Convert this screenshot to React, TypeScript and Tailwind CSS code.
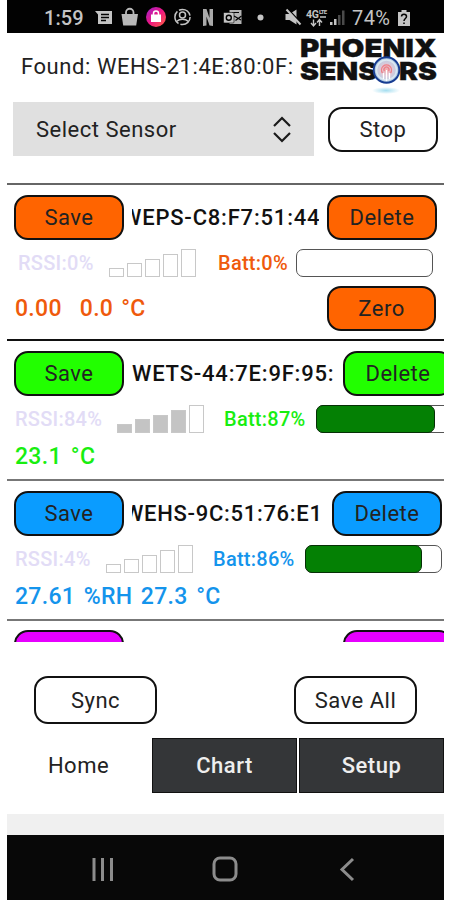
import { useState } from "react";
import clsx from "clsx";

type Sensor = {
  id: number;
  name: string;
  nameClass: string;
  rssi: number;
  rssiClass: string;
  barsClass: string;
  filledBars: number;
  batt: number;
  battClass: string;
  readings: string[];
  readingsClass: string;
  lineClass: string;
  fill: string;
  text: string;
  zero?: boolean;
};

const sensors: Sensor[] = [
  {
    id: 1,
    name: "WEPS-C8:F7:51:44:",
    nameClass: "w-[187px] mr-2 indent-[-10px] tracking-[0.8px]",
    rssi: 0,
    rssiClass: "ml-[3px] w-[91px]",
    barsClass: "mr-[22px]",
    filledBars: 0,
    batt: 0,
    battClass: "w-[78px]",
    readings: ["0.00", "0.0", "°C"],
    readingsClass: "gap-[8px] *:first:mr-[10px]",
    lineClass: "bg-[#666]",
    fill: "bg-[#ff6400]",
    text: "text-[#ef5a0c]",
    zero: true,
  },
  {
    id: 2,
    name: "WETS-44:7E:9F:95:",
    nameClass: "w-[203px] mr-2 tracking-[0.8px]",
    rssi: 84,
    rssiClass: "w-[102px]",
    barsClass: "mr-[20px]",
    filledBars: 4,
    batt: 87,
    battClass: "w-[92px]",
    readings: ["23.1", "°C"],
    readingsClass: "gap-[9px]",
    lineClass: "bg-[#111]",
    fill: "bg-[#22ff00]",
    text: "text-[#18ee10]",
  },
  {
    id: 3,
    name: "WEHS-9C:51:76:E1:",
    nameClass: "w-[191px] mr-[9px] indent-[-8px] tracking-[0.7px]",
    rssi: 4,
    rssiClass: "w-[91px]",
    barsClass: "mr-[20px]",
    filledBars: 0,
    batt: 86,
    battClass: "w-[92px]",
    readings: ["27.61", "%RH", "27.3", "°C"],
    readingsClass: "gap-[8.500px]",
    lineClass: "bg-[#777]",
    fill: "bg-[#0a9cff]",
    text: "text-[#1494ec]",
  },
];

const barHeights = ["h-[9px]", "h-[14px]", "h-[18px]", "h-[23px]", "h-7"];

function Button({ label, className }: { label: string; className: string }) {
  return (
    <button
      className={clsx(
        "shrink-0 border-2 border-[#111] rounded-[14px] pt-px text-[22px] leading-none tracking-[0.5px] text-[#222] flex items-center justify-center",
        className
      )}
    >
      {label}
    </button>
  );
}

function StatusBar() {
  return (
    <header className="h-[33px] bg-[#020202] flex items-center shrink-0 pl-[37px] pt-[2px] text-[#c4c4c4]">
      <span className="w-[49px] text-[20px] font-medium tracking-[0.1px]">1:59</span>
      <svg width="178" height="24" viewBox="92 6 178 24" fill="none">
        {/* messages */}
        <path d="M94 11h17v13H97V14.500z" fill="#c4c4c4" />
        <path d="M100 14.500h8M100 17.500h8M100 20.500h5" stroke="#020202" strokeWidth="1.300" />
        {/* shopping bag */}
        <path d="M120.500 14h16.500l-1.800 11.500h-13z" fill="#b8b8b8" />
        <path d="M125 15v-2.500a3.700 3.700 0 0 1 7.500 0V15" stroke="#b8b8b8" strokeWidth="1.800" />
        {/* shop app badge */}
        <defs>
          <linearGradient id="shop" x1="0" x2="1" y1="0" y2="1">
            <stop offset="0" stopColor="#9a20d0" />
            <stop offset=".5" stopColor="#ee1680" />
            <stop offset="1" stopColor="#ff6540" />
          </linearGradient>
        </defs>
        <circle cx="155" cy="17" r="10" fill="url(#shop)" />
        <path d="M150 14.500h10v7.500h-10z" fill="#fff" />
        <path d="M152.500 15v-1.500a2.500 2.500 0 0 1 5 0V15" stroke="#fff" strokeWidth="1.500" />
        {/* account */}
        <circle cx="181.500" cy="17" r="7.600" stroke="#c4c4c4" strokeWidth="1.500" strokeDasharray="14 2" />
        <circle cx="181.500" cy="15" r="3" stroke="#c4c4c4" strokeWidth="1.500" />
        <path d="M175.500 21.500c3.500-3 8.500-3 12 0" stroke="#c4c4c4" strokeWidth="1.500" />
        {/* netflix */}
        <path d="M202 9h3.500l3 9V9h3.500v17l-3.500-.5-3-9v9l-3.500.5z" fill="#aaa" />
        {/* outlook */}
        <path d="M228.500 10h12v14h-12z" fill="#b4b4b4" />
        <path d="M231 12.500h7M233 16l7 4M240.500 16l-6 4.500" stroke="#020202" strokeWidth="1.200" />
        <rect x="222.500" y="12.500" width="10.500" height="10.500" rx="1" fill="#c4c4c4" stroke="#020202" strokeWidth=".6" />
        <circle cx="227.800" cy="17.800" r="2.500" stroke="#020202" strokeWidth="1.400" />
        <circle cx="259.500" cy="17.500" r="3" fill="#c4c4c4" />
      </svg>
      <svg className="ml-[10px]" width="66" height="24" viewBox="280 6 66 24" fill="none">
        {/* muted speaker */}
        <path d="M284.500 14h4l7-4.500v15l-7-4.500h-4z" fill="#c4c4c4" />
        <path d="M286.500 8.500l14 15" stroke="#020202" strokeWidth="1.600" />
        <path d="M285.500 9.500l14 15" stroke="#c4c4c4" strokeWidth="2" />
        <text x="305" y="17.500" fontSize="10.500" fontWeight="700" fill="#c4c4c4" textLength="13">4G</text>
        <text x="318" y="14" fontSize="6" fontWeight="700" fill="#c4c4c4" textLength="8">LTE</text>
        <path d="M319 17h6M312.500 19.500v6M310 23l2.500 3 2.500-3M318.500 26v-6M316 22.500l2.500-3 2.500 3" stroke="#c4c4c4" strokeWidth="1.400" />
        <path d="M329 22h2.500v3H329zM333 19h2.500v6H333z" fill="#c4c4c4" />
        <path d="M337 15h2.500v10H337zM341 10.500h2.500V25H341z" fill="#4a4a4a" />
      </svg>
      <span className="ml-[5px] w-[45px] text-[20px] tracking-[0.4px]">74%</span>
      <svg width="14" height="18" viewBox="0 0 14 18" fill="none">
        <path d="M4.500 1h5v2H13v14H1V3h3.500z" fill="#c4c4c4" />
        <path d="M4.500 7.500c0-3 5-3 5 0 0 2-2.500 2-2.500 4.500M7 13.500v1.500" stroke="#020202" strokeWidth="1.500" />
      </svg>
    </header>
  );
}

function Logo() {
  return (
    <svg className="shrink-0" width="138" height="60" viewBox="300 36 138 60">
      <defs>
        <radialGradient id="orb">
          <stop offset="0" stopColor="#f3a9ab" />
          <stop offset=".45" stopColor="#dfc9d8" />
          <stop offset="1" stopColor="#a9cfe8" />
        </radialGradient>
        <radialGradient id="glow">
          <stop offset="0" stopColor="#a5def0" />
          <stop offset="1" stopColor="#a5def0" stopOpacity="0" />
        </radialGradient>
      </defs>
      <g fill="#111" stroke="#111" strokeWidth=".3" fontFamily="Inter, sans-serif" fontSize="25" fontWeight="900">
        <text x="300" y="56.500" textLength="137" lengthAdjust="spacingAndGlyphs">PHOENIX</text>
        <text x="300" y="79.500" textLength="137" lengthAdjust="spacingAndGlyphs">SENSORS</text>
      </g>
      <ellipse cx="386" cy="90.500" rx="14" ry="3.500" fill="url(#glow)" />
      <circle cx="386.500" cy="70" r="12.800" fill="url(#orb)" stroke="#173c91" strokeWidth="2" />
      <circle cx="386.500" cy="70" r="10" fill="none" stroke="#dce9f2" strokeWidth="1.500" />
      <path d="M386.500 70v11M383.500 73v6M389.500 73v6" stroke="#fff" strokeWidth="1.300" />
      <path d="M382.500 73a5 5 0 1 1 8 0M384.500 71a2.500 2.500 0 1 1 4 0" fill="none" stroke="#ed8088" strokeWidth="1.300" />
    </svg>
  );
}

function SensorRow({ sensor }: { sensor: Sensor }) {
  return (
    <div className={clsx("shrink-0 overflow-hidden", sensor.zero ? "h-[156px]" : "h-[140px]")}>
      <div className={clsx("h-[2px]", sensor.lineClass)} />
      <div className="flex items-center mt-[10px] pl-[7px] h-[45px]">
        <Button label="Save" className={clsx("w-[110px] h-[45px] mr-2", sensor.fill)} />
        <span className={clsx("shrink-0 overflow-hidden whitespace-nowrap text-[22px] font-medium text-[#111]", sensor.nameClass)}>
          {sensor.name}
        </span>
        <Button label="Delete" className={clsx("w-[110px] h-[45px]", sensor.fill)} />
      </div>
      <div className="flex mt-[9px] pl-2 h-7 text-[20px] leading-7 font-medium tracking-[0.25px] whitespace-nowrap">
        <span className={clsx("shrink-0 text-[#e2dcf6]", sensor.rssiClass)}>RSSI:{sensor.rssi}%</span>
        <div className={clsx("flex items-end gap-[3px] shrink-0", sensor.barsClass)}>
          {barHeights.map((height, i) => (
            <div
              key={height}
              className={clsx("w-[15px] border-[1.5px] border-[#c8c8c8]", height, i < sensor.filledBars && "bg-[#c4c4c4]")}
            />
          ))}
        </div>
        <span className={clsx("shrink-0", sensor.battClass, sensor.text)}>Batt:{sensor.batt}%</span>
        <div className="w-[137px] h-7 shrink-0 rounded-[7px] border border-[#555]">
          {sensor.batt > 0 && (
            <div
              className="-mt-px -ml-px h-7 rounded-[7px] border-[1.5px] border-[#063006] bg-[#048004]"
              style={{ width: `${sensor.batt + 1}%` }}
            />
          )}
        </div>
      </div>
      <div className={clsx("flex justify-between items-center pl-2 pr-2", sensor.zero ? "mt-[9px] h-[45px]" : "h-[46px] pt-px")}>
        <div className={clsx("flex pt-px text-[23px] font-medium tracking-[0.3px]", sensor.readingsClass, sensor.text)}>
          {sensor.readings.map((reading) => (
            <span key={reading}>{reading}</span>
          ))}
        </div>
        {sensor.zero && <Button label="Zero" className={clsx("w-[109px] h-[45px]", sensor.fill)} />}
      </div>
    </div>
  );
}

export default function App() {
  const [tab, setTab] = useState("Home");

  return (
    <div className="w-[450px] h-[900px] bg-white pl-[7px] pr-[6px] overflow-hidden font-[Roboto,sans-serif]">
      <div className="w-[437px] h-full flex flex-col overflow-hidden">
        <StatusBar />

        <div className="h-[69px] flex shrink-0 pl-[14px] pt-[3px]">
          <span className="w-[279px] shrink-0 pt-4 text-[22px] leading-[30px] tracking-[0.57px] whitespace-nowrap text-[#222]">
            Found: WEHS-21:4E:80:0F:
          </span>
          <Logo />
        </div>

        <div className="h-[81px] flex shrink-0 pl-[6px]">
          <div className="w-[301px] h-[54px] bg-[#e0e0e0] flex items-center justify-between pl-[23px] pr-[22px] text-[22px] tracking-[0.5px] text-[#222]">
            Select Sensor
            <svg width="20" height="28" viewBox="0 0 20 28" fill="none" stroke="#1a1a1a" strokeWidth="2.200">
              <path d="M2 11l8-8 8 8M2 18l8 8 8-8" />
            </svg>
          </div>
          <Button label="Stop" className="w-[110px] h-[45px] ml-[14px] mt-[5px] bg-white" />
        </div>

        <div className="h-[459px] shrink-0 overflow-hidden flex flex-col">
          {sensors.map((sensor) => (
            <SensorRow key={sensor.id} sensor={sensor} />
          ))}
          <div className="h-[2px] bg-[#777] shrink-0" />
          <div className="flex pl-[7px] mt-[9px]">
            <Button label="Save" className="w-[110px] h-[45px] mr-[219px] bg-[#e600ff]" />
            <Button label="Delete" className="w-[110px] h-[45px] bg-[#e600ff]" />
          </div>
        </div>

        <div className="h-[96px] shrink-0 flex pt-[34px] pl-[27px]">
          <Button label="Sync" className="w-[123px] h-[48px] bg-white" />
          <Button label="Save All" className="w-[123px] h-[48px] ml-[137px] bg-white" />
        </div>

        <nav className="h-[55px] shrink-0 flex gap-[2px] text-[22px] tracking-[0.5px]">
          {["Home", "Chart", "Setup"].map((name) => (
            <button
              key={name}
              onClick={() => setTab(name)}
              className={clsx(
                "flex-1",
                tab === name ? "bg-white text-[#222]" : "bg-[#343638] border border-[#111] font-medium text-[#eee]"
              )}
            >
              {name}
            </button>
          ))}
        </nav>

        <div className="h-[21px] shrink-0" />
        <div className="h-[21px] shrink-0 bg-[#f0f0f0]" />

        <footer className="h-[65px] shrink-0 bg-[#080808] flex items-center pt-[2px] pl-[84px]">
          <svg width="268" height="28" viewBox="91 855 268 28" fill="none" stroke="#8c8c8c" strokeWidth="3">
            <path d="M94 858v23M102.500 858v23M111.500 858v23" />
            <rect x="214" y="858" width="22" height="22" rx="6" />
            <path d="M353 859l-11 10.500 11 10.500" />
          </svg>
        </footer>
      </div>
    </div>
  );
}
